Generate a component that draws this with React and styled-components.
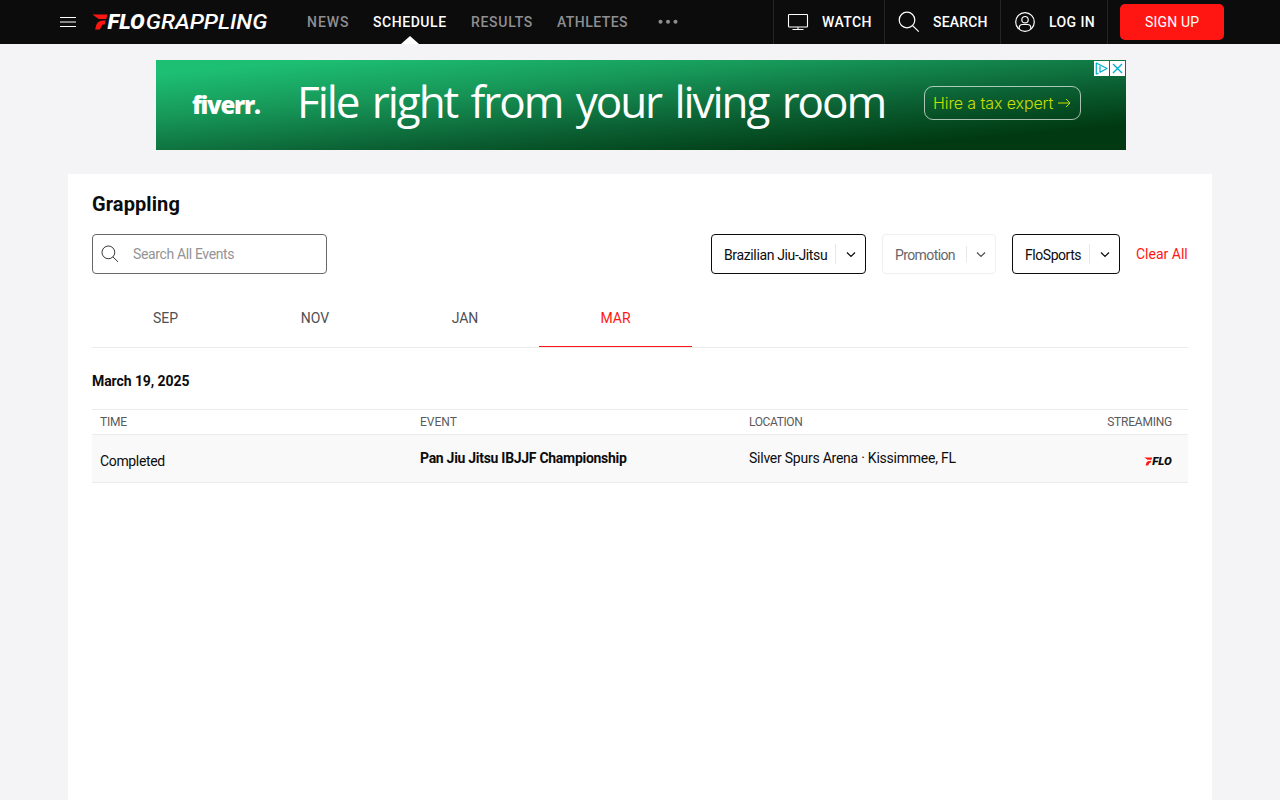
import React from "react";
import styled, { createGlobalStyle } from "styled-components";

const Global = createGlobalStyle`
  * { box-sizing: border-box; }
  html, body { margin: 0; height: 100%; overflow: hidden; }
  body { background: #f4f4f7; color: #0c0c0c; font: 400 14px/20px Roboto, "Liberation Sans", sans-serif; }
  svg { display: block; flex: none; }
  button, input { font: inherit; }
`;

const Label = styled.span`
  white-space: nowrap;
  letter-spacing: ${(p) => p.$ls || 0}px;
  margin-right: ${(p) => -(p.$ls || 0)}px;
`;

const Header = styled.header`
  height: 44px;
  background: #0c0c0c;
  color: #fff;
  display: flex;
  align-items: center;
  padding: 0 56px 0 60px;
`;
const Brand = styled.a`margin-left: 16px;`;
const Nav = styled.nav`
  display: flex;
  align-items: center;
  height: 100%;
  margin-left: 33px;
  flex: 1;
`;
const NavItem = styled.a`
  position: relative;
  height: 44px;
  line-height: 44px;
  width: ${(p) => p.$w}px;
  margin-right: 24px;
  font-weight: 500;
  color: ${(p) => (p.$active ? "#fff" : "#8f8f92")};
`;
const Pointer = styled.svg`
  position: absolute;
  left: 28px;
  bottom: 0;
`;
const Action = styled.a`
  height: 44px;
  width: ${(p) => p.$w}px;
  padding-left: 13px;
  display: flex;
  align-items: center;
  border-left: 1px solid #252525;
  font-weight: 500;
  & > span { margin-left: 13px; }
`;
const SignUp = styled.button`
  width: 104px;
  height: 36px;
  border: 0;
  border-radius: 5px;
  background: #ff1612;
  color: #fff;
  padding: 0;
`;
const SignUpSlot = styled.div`
  height: 44px;
  display: flex;
  align-items: center;
  padding-left: 12px;
  border-left: 1px solid #252525;
`;

const Ad = styled.div`
  position: relative;
  width: 970px;
  height: 90px;
  margin: 16px 0 24px 156px;
  padding-left: 36px;
  display: flex;
  align-items: center;
  color: #fff;
  background: linear-gradient(175deg, #1dbf73 8%, #17995a 32%, #0b5f32 62%, #003912 86%);
`;
const Fiverr = styled.div`
  width: 105px;
  margin-top: -1px;
  font: 800 24px/30px "Open Sans", sans-serif;
  letter-spacing: -1.3px;
`;
const Slogan = styled.div`
  width: 627px;
  margin-top: -9px;
  font: 400 44px/60px "Open Sans", sans-serif;
  letter-spacing: -2.05px;
  word-spacing: 4px;
  white-space: nowrap;
`;
const Hire = styled.div`
  width: 157px;
  height: 34px;
  margin-top: -4px;
  padding: 0 9px 0 8px;
  display: flex;
  align-items: center;
  justify-content: space-between;
  border: 1px solid rgba(255, 255, 255, 0.65);
  border-radius: 9px;
  color: #c8e000;
  font: 300 16px/30px Inter, sans-serif;
`;
const AdBadges = styled.div`
  position: absolute;
  top: 1px;
  right: 1px;
  display: flex;
  gap: 1px;
`;
const AdBadge = styled.div`background: #fff; width: 15px; height: 15px;`;

const Panel = styled.main`
  margin: 0 68px;
  height: 640px;
  padding: 18px 24px 0;
  background: #fff;
`;
const Title = styled.h1`
  margin: 0 0 18px;
  font-size: 20px;
  line-height: 24px;
  font-weight: 700;
`;
const Filters = styled.div`
  display: flex;
  align-items: center;
  gap: 16px;
  height: 40px;
`;
const SearchBox = styled.label`
  width: 235px;
  height: 40px;
  margin-right: auto;
  padding-left: 8px;
  display: flex;
  align-items: center;
  gap: 14px;
  border: 1px solid #68686b;
  border-radius: 4px;
  color: #949494;
`;
const Select = styled.div`
  width: ${(p) => p.$w}px;
  height: 40px;
  padding: 2px 9px 0 12px;
  display: flex;
  align-items: center;
  border: 1px solid ${(p) => (p.$muted ? "#efefef" : "#0c0c0c")};
  border-radius: 4px;
  color: ${(p) => (p.$muted ? "#66666a" : "#0c0c0c")};
  & > span { flex: 1; margin-right: 0; }
`;
const Divider = styled.i`
  width: 1px;
  height: ${(p) => p.$h}px;
  margin: -2px ${(p) => (p.$h < 20 ? 9 : 10)}px 0 0;
  background: #e8e8e8;
`;
const Clear = styled.a`color: #ff1612; width: 52px; white-space: nowrap;`;

const Tabs = styled.div`
  display: flex;
  height: 48px;
  margin-top: 26px;
  border-bottom: 1px solid #ebebeb;
`;
const Tab = styled.div`
  width: ${(p) => p.$w}px;
  height: 47px;
  padding-top: 8px;
  text-align: center;
  color: ${(p) => (p.$active ? "#ff1612" : "#505053")};
  border-bottom: 1px solid ${(p) => (p.$active ? "#ff1612" : "transparent")};
`;
const DateHead = styled.h2`
  margin: 23px 0 18px;
  font-size: 14px;
  line-height: 20px;
  font-weight: 700;
`;
const Row = styled.div`
  display: grid;
  grid-template-columns: 320px 329px 1fr auto;
  align-items: center;
  padding: 0 16px 0 8px;
  border-bottom: 1px solid #ebebeb;
`;
const HeadRow = styled(Row)`
  height: 26px;
  border-top: 1px solid #ebebeb;
  font-size: 12px;
  color: #5a5a5e;
  & > span:last-child { margin-right: 0; }
`;
const EventRow = styled(Row)`
  height: 48px;
  background: #f9f9f9;
`;
const Cell = styled.div`
  padding: ${(p) => (p.$low ? "5px 0 0" : "0 0 2px")};
  font-weight: ${(p) => (p.$strong ? 700 : 400)};
`;

const LogoText = styled.text`
  font-family: Roboto, "Liberation Sans", sans-serif;
  font-size: 20.8px;
  font-style: italic;
  font-weight: ${(p) => p.$weight};
`;
const FloMark = ({ color }) => (
  <>
    <path fill="#ff1612" d="M.4 .4H15.4L14.3 4.9H6.8ZM3.1 15.4 4.4 10.8C5.7 8 7.6 6.6 13.7 6.6L12.6 10.6H10.6L7.8 15.4Z" />
    <LogoText $weight={900} x="15.6" y="15.3" textLength="37" lengthAdjust="spacingAndGlyphs" fill={color}>FLO</LogoText>
  </>
);
const Logo = () => (
  <svg width="182" height="32" viewBox="0 -8 182 32">
    <FloMark color="#fff" />
    <LogoText $weight={500} x="53.8" y="15.3" textLength="121.5" lengthAdjust="spacingAndGlyphs" fill="#fff">GRAPPLING</LogoText>
  </svg>
);
const SearchIcon = ({ size = 22, color = "#fff" }) => (
  <svg width={size} height={size} viewBox="0 0 22 22" fill="none" stroke={color} strokeWidth="1.2">
    <circle cx="9" cy="9" r="7.8" /><path d="m14.6 14.6 6.2 6" />
  </svg>
);
const Chevron = ({ color }) => (
  <svg width="10" height="8" viewBox="0 0 10 8" fill="none" stroke={color} strokeWidth="1.2"><path d="m1 1.5 4 4 4-4" /></svg>
);

export default function App() {
  return (
    <>
      <Global />
      <Header>
        <svg width="16" height="12" viewBox="0 0 16 12"><path stroke="#fff" strokeWidth="1.2" d="M0 1.5h16M0 6h16M0 10.5h16" /></svg>
        <Brand><Logo /></Brand>
        <Nav>
          <NavItem $w={42}><Label $ls={0.95}>NEWS</Label></NavItem>
          <NavItem $w={74} $active>
            <Label $ls={0.55}>SCHEDULE</Label>
            <Pointer width="18" height="8" viewBox="0 0 18 8"><path fill="#fff" d="M0 8 9 0l9 8z" /></Pointer>
          </NavItem>
          <NavItem $w={62}><Label $ls={0.7}>RESULTS</Label></NavItem>
          <NavItem $w={71}><Label $ls={0.45}>ATHLETES</Label></NavItem>
          <svg width="32" height="6" viewBox="0 0 32 6" fill="#8f8f92"><circle cx="8.5" cy="2.8" r="2" /><circle cx="16" cy="2.8" r="2" /><circle cx="23.5" cy="2.8" r="2" /></svg>
        </Nav>
        <Action $w={111}>
          <svg width="22" height="18" viewBox="0 0 22 18" fill="none" stroke="#fff" strokeWidth="1.1"><rect x="1.5" y="1.5" width="19" height="12.5" rx=".7" /><path d="M11 14v2.5M5.5 16.5h11" /></svg>
          <Label $ls={0.4}>WATCH</Label>
        </Action>
        <Action $w={116}><SearchIcon /><Label $ls={0.2}>SEARCH</Label></Action>
        <Action $w={107}>
          <svg width="22" height="22" viewBox="0 0 22 22" fill="none" stroke="#fff" strokeWidth="1.2"><circle cx="11" cy="11" r="9.3" /><circle cx="11" cy="8.7" r="3.2" /><path d="M5.2 18v-1.2Q5.2 13.5 8.5 13.5h5q3.3 0 3.3 3.3V18" /></svg>
          <Label $ls={0.4}>LOG IN</Label>
        </Action>
        <SignUpSlot><SignUp><Label $ls={0.2}>SIGN UP</Label></SignUp></SignUpSlot>
      </Header>

      <Ad>
        <Fiverr>fiverr.</Fiverr>
        <Slogan>File right from your living room</Slogan>
        <Hire>
          <Label $ls={-0.1}>Hire a tax expert</Label>
          <svg width="13" height="10" viewBox="0 0 13 10" fill="none" stroke="#c8e000"><path d="M0 5h12M8 1l4 4-4 4" /></svg>
        </Hire>
        <AdBadges>
          <AdBadge><svg width="15" height="15" viewBox="0 0 15 15" fill="none" stroke="#00aecd" strokeWidth="1.2" strokeLinejoin="round"><path d="M4.5 12.4 2.3 13V2L13 7.5 6 11.2V5" /></svg></AdBadge>
          <AdBadge><svg width="15" height="15" viewBox="0 0 15 15" stroke="#00aecd" strokeWidth="1.4"><path d="m3 3 9 9m0-9-9 9" /></svg></AdBadge>
        </AdBadges>
      </Ad>

      <Panel>
        <Title><Label $ls={0.1}>Grappling</Label></Title>
        <Filters>
          <SearchBox><SearchIcon size={18} color="#333" /><Label $ls={-0.36}>Search All Events</Label></SearchBox>
          <Select $w={155}><Label $ls={-0.36}>Brazilian Jiu-Jitsu</Label><Divider $h={20} /><Chevron color="#0c0c0c" /></Select>
          <Select $w={114} $muted><Label $ls={-0.6}>Promotion</Label><Divider $h={16} /><Chevron color="#505053" /></Select>
          <Select $w={108}><Label $ls={-0.45}>FloSports</Label><Divider $h={20} /><Chevron color="#0c0c0c" /></Select>
          <Clear><Label>Clear All</Label></Clear>
        </Filters>
        <Tabs>
          <Tab $w={147}><Label>SEP</Label></Tab>
          <Tab $w={152}><Label>NOV</Label></Tab>
          <Tab $w={148}><Label>JAN</Label></Tab>
          <Tab $w={153} $active><Label>MAR</Label></Tab>
        </Tabs>
        <DateHead><Label $ls={-0.08}>March 19, 2025</Label></DateHead>
        <HeadRow>
          <Label $ls={-0.25}>TIME</Label><Label>EVENT</Label><Label $ls={-0.38}>LOCATION</Label><Label $ls={-0.22}>STREAMING</Label>
        </HeadRow>
        <EventRow>
          <Cell $low><Label $ls={-0.35}>Completed</Label></Cell>
          <Cell $strong><Label $ls={-0.29}>Pan Jiu Jitsu IBJJF Championship</Label></Cell>
          <Cell><Label $ls={-0.24}>Silver Spurs Arena · Kissimmee, FL</Label></Cell>
          <Cell $low><svg width="28" height="17" viewBox="0 -8 53 32"><FloMark color="#0c0c0c" /></svg></Cell>
        </EventRow>
      </Panel>
    </>
  );
}
